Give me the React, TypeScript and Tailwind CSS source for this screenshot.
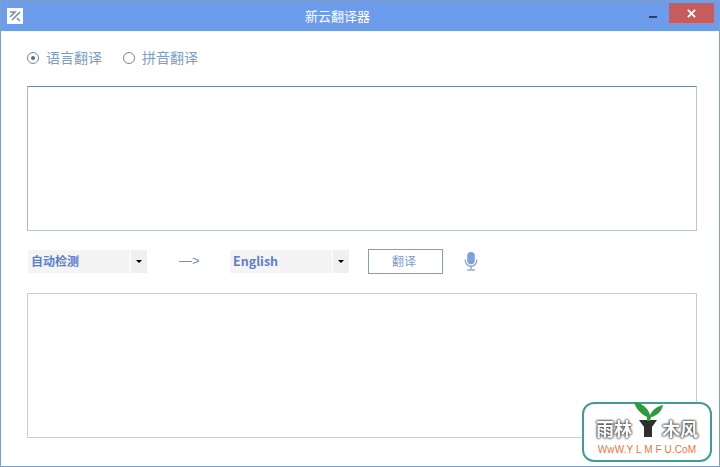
import React from 'react';

const cjk = { fontFamily: '"Noto Sans CJK SC", "Liberation Sans", sans-serif' };

const Radio: React.FC<{ label: string; checked?: boolean }> = ({ label, checked }) => (
  <label className="flex items-center gap-[7px] text-[14px] leading-[18px] text-[#7f9cc4]">
    <span className="flex h-[12px] w-[12px] translate-y-[1px] items-center justify-center rounded-full border border-[#6f8aa5] bg-white">
      {checked && <span className="h-[4px] w-[4px] rounded-full bg-[#4f6d8f]" />}
    </span>
    {label}
  </label>
);

const Select: React.FC<{ value: string; size: string }> = ({ value, size }) => (
  <div className="flex h-[23px] w-[119px] gap-[1px]">
    <div className={`flex flex-1 items-center bg-[#f4f4f4] pl-[3px] font-bold text-[#5b7fc9] ${size}`}>{value}</div>
    <div className="flex w-[16px] items-center justify-center bg-[#f0f0f0]">
      <span className="h-0 w-0 border-x-[3px] border-t-[3px] border-x-transparent border-t-black" />
    </div>
  </div>
);

const Watermark = () => (
  <div className="absolute left-[581px] top-[401px] flex h-[60px] w-[130px] flex-col items-center rounded-[12px] border-2 border-[#3f9c98] bg-white">
    <div className="relative mt-[14px] flex h-[20px] w-[102px] items-center justify-between text-[18px] font-bold leading-none text-white [text-shadow:0_0_2px_#444,0_0_2px_#444,0_0_3px_#444]">
      <span>雨林</span>
      <span>木风</span>
      <svg viewBox="0 0 30 36" className="absolute left-[37px] top-[-16px] h-[36px] w-[30px]">
        <path d="M6 18 L24 18 L19 25 L19 35 L11 35 L11 25 Z" fill="#2f2f2f" />
        <path d="M1 0 C8 1 15 5 17 13 C20 7 25 4 30 3 C29 9 24 14 18 15 L17 19 L14 19 L14 15 C8 12 3 7 1 0 Z" fill="#2f9b3c" />
      </svg>
    </div>
    <div className="mt-[6px] text-[10px] leading-[12px] tracking-[0.1px] text-[#e8763a]" style={{ fontFamily: '"Liberation Sans", sans-serif' }}>
      WwW.Y L M F U.CoM
    </div>
  </div>
);

export default function App() {
  return (
    <div className="relative flex h-[467px] w-[720px] flex-col overflow-hidden border border-[#7d9fce] bg-white" style={cjk}>
      <div className="flex h-[30px] shrink-0 items-center bg-[#6e9cec] pl-[6px]">
        <div className="flex h-[16px] w-[16px] items-center justify-center bg-white">
          <svg viewBox="0 0 16 16" className="h-[16px] w-[16px]" fill="none" stroke="#6f8db5" strokeWidth="1.6">
            <path d="M3 4 H8 L3 9 M13 4 L5 12 M10 10 L13 13" />
          </svg>
        </div>
        <div className="flex-1 pl-[25px] pr-[22px] text-center text-[13px] text-white">新云翻译器</div>
        <div className="mb-[8px] mr-[12px] h-[2px] w-[8px] translate-y-[5px] bg-[#2b3f66]" />
        <div className="mb-[6px] mr-[5px] flex h-[20px] w-[45px] items-center justify-center bg-[#c85c5c]">
          <svg viewBox="0 0 10 10" className="h-[9px] w-[9px]" stroke="white" strokeWidth="2">
            <path d="M1 1 L9 9 M9 1 L1 9" />
          </svg>
        </div>
      </div>

      <div className="flex flex-col px-[26px]">
        <div className="mt-[17px] flex h-[18px] items-center gap-[21px]">
          <Radio label="语言翻译" checked />
          <Radio label="拼音翻译" />
        </div>

        <div className="mt-[20px] h-[145px] w-[670px] border border-[#b9c9cc] border-t-[#6b8a99] border-l-[#a9bcc4]" />

        <div className="mt-[18px] flex h-[24px] items-center">
          <div className="ml-[1px]">
            <Select value="自动检测" size="text-[12px]" />
          </div>
          <span className="ml-[32px] w-[51px] text-[13px] text-[#6f8fbf]" style={{ fontFamily: '"Liberation Sans", sans-serif' }}>—&gt;</span>
          <Select value="English" size="text-[12.5px]" />
          <button className="ml-[19px] flex h-[25px] w-[75px] items-center justify-center border border-[#7f9fba] bg-white pr-[3px] text-[12px] text-[#7f9cc4]">
            翻译
          </button>
          <svg viewBox="0 0 14 20" className="ml-[21px] mt-[1px] h-[19px] w-[14px]">
            <rect x="3" y="0" width="8" height="13" rx="4" fill="#7ea0de" />
            <path d="M1 8 V9 A6 6 0 0 0 13 9 V8" fill="none" stroke="#8aa8dc" strokeWidth="1.4" />
            <path d="M7 15 V18 M3 19 H11" stroke="#8aa8dc" strokeWidth="1.5" />
          </svg>
        </div>

        <div className="mt-[20px] h-[145px] w-[670px] border border-[#c5cfcf]" />
      </div>

      <Watermark />
    </div>
  );
}
